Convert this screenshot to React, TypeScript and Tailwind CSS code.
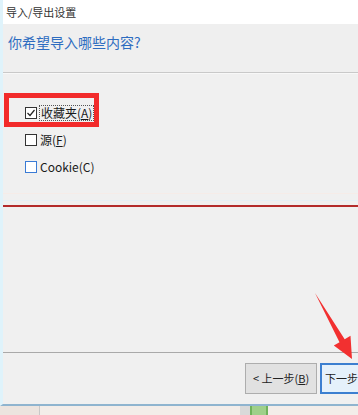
import React from "react";

const cn = '"Microsoft YaHei", "Noto Sans CJK SC", "Noto Sans", sans-serif';

function Box({ checked, blue }: { checked?: boolean; blue?: boolean }) {
  return (
    <span
      className={`relative inline-block w-[12px] h-[12px] bg-white border ${
        blue ? "border-[#3a7bd5]" : "border-[#333333]"
      }`}
    >
      {checked && (
        <svg className="absolute left-0 top-0" width="10" height="10" viewBox="0 0 10 10">
          <path d="M1.5 5 L4 7.5 L8.5 2" fill="none" stroke="#222" strokeWidth="1.2" />
        </svg>
      )}
    </span>
  );
}

export default function App() {
  return (
    <div
      className="relative w-[358px] h-[415px] overflow-hidden bg-[#efe9e4]"
      style={{ fontFamily: cn }}
    >
      {/* dialog window */}
      <div className="flex flex-col h-[406px] bg-[#f0f0f0] border-b-2 border-b-[#8fb4cf] border-l-[3px] border-l-[#dff3fb]">
        <div className="h-[24px] bg-white flex items-center pl-[3px] text-[11px] text-[#333333]">
          导入/导出设置
        </div>
        <div className="h-[48px] bg-[#efefef] flex items-center pl-[5px] pb-[12px] text-[14px] text-[#2d6cc0]">
          你希望导入哪些内容?
        </div>
        <div className="h-px bg-[#c9c9c9]" />
        <div className="h-px bg-[#f8f8f8]" />
        <div className="flex flex-col pl-[22px] pt-[32px] gap-[14px] text-[12px] text-[#1a1a1a]">
          <div className="flex items-center gap-[2px] h-[13px]">
            <Box checked />
            <span className="border border-dotted border-[#555] px-[1px] leading-[14px]">收藏夹(<u>A</u>)</span>
          </div>
          <div className="flex items-center gap-[3px] h-[13px]">
            <Box />
            <span className="leading-[14px]">源(<u>F</u>)</span>
          </div>
          <div className="flex items-center gap-[3px] h-[13px]">
            <Box blue />
            <span className="leading-[14px]">Cookie(C)</span>
          </div>
        </div>
        <div className="mt-[20px] h-px bg-[#f6ece8]" />
        <div className="mt-[6px] h-px bg-[#e6f0f6]" />
        <div className="mt-[4px] h-[2px] bg-[#b32b2b]" />
        <div className="flex-1" />
        <div className="h-px bg-[#a9a9a9]" />
        <div className="h-[10px]" />
        <div className="flex justify-end gap-[3px] h-[31px] mr-[-6px]">
          <div className="w-[72px] h-full flex items-center justify-center bg-[#e1e1e1] border border-[#adadad] text-[11px] text-[#222]">
            &lt; 上一步(<u>B</u>)
          </div>
          <div className="w-[44px] h-full flex items-center pl-[3px] bg-[#e5f1fb] border-2 border-[#3c7fd0] text-[11px] text-[#222] whitespace-nowrap overflow-hidden">
            下一步
          </div>
        </div>
        <div className="h-[10px]" />
      </div>
      {/* background below window */}
      <div className="flex h-[9px]">
        <div className="w-[40px] bg-[#ece4df] border-r border-[#c8c8c8]" />
        <div className="w-[200px] bg-[#f3ede9]" />
        <div className="w-[10px] bg-[#d9d9d9]" />
        <div className="w-[18px] bg-[#9fd08a] border-x-2 border-[#6fb35b]" />
        <div className="flex-1 bg-[#f3ede9]" />
      </div>

      {/* red highlight rectangle */}
      <div className="absolute left-[4px] top-[93px] w-[95px] h-[34px] border-[5px] border-[#f22b2b]" />

      {/* red arrow */}
      <svg className="absolute left-0 top-0 pointer-events-none" width="358" height="415">
        <polygon
          points="315,293 344.7,339.2 350.5,335.8 352,359 333.8,345.5 339.5,342.2"
          fill="#f23030"
        />
      </svg>
    </div>
  );
}
